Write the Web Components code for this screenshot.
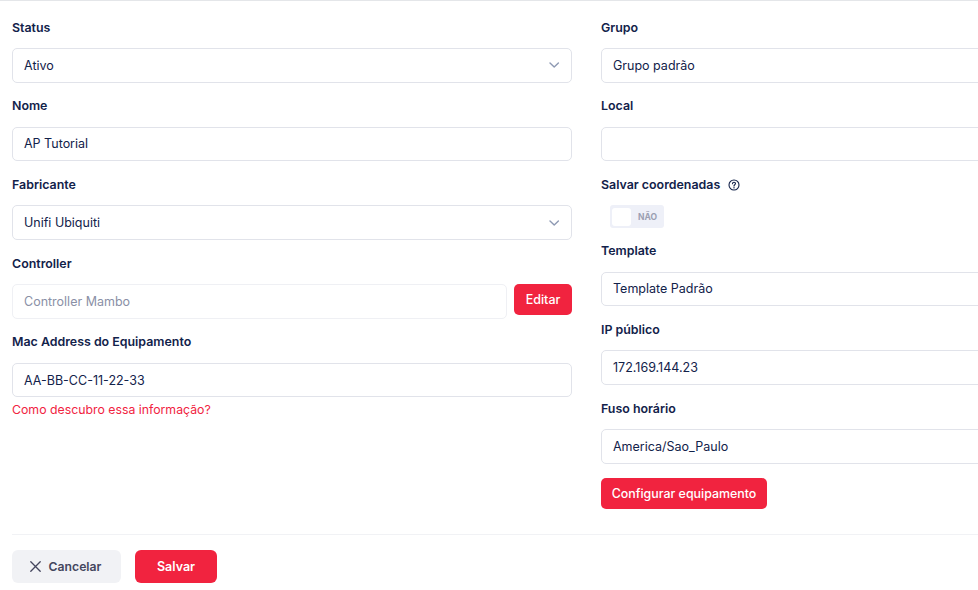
<!DOCTYPE html>
<html>

<head>
  <meta charset="UTF-8" />
  <title>Equipamento</title>
  <style>
    * {
      box-sizing: border-box;
    }

    html,
    body {
      margin: 0;
      height: 590px;
      overflow: hidden;
      background: #fff;
      font-family: Inter, "Noto Sans", sans-serif;
    }
  </style>
</head>

<body>
  <template id="form-field-template">
    <style>
      :host {
        display: block;
        box-sizing: border-box;
        height: 78.7px;
        padding-top: 17.2px;
      }

      label {
        display: flex;
        align-items: center;
        gap: 8px;
        height: 18px;
        margin-bottom: 11.7px;
        font-size: 12.4px;
        font-weight: 600;
        color: #12224a;
        white-space: nowrap;
      }
    </style>
    <label><span id="text"></span><slot name="hint"></slot></label>
    <slot></slot>
  </template>

  <template id="text-box-template">
    <style>
      :host {
        display: flex;
        box-sizing: border-box;
        align-items: center;
        height: 34.8px;
        padding: 0 11px;
        flex: 1;
        min-width: 0;
        font-size: 12.5px;
        color: #12224a;
        background: #fff;
        border: 1px solid #e1e3ea;
        border-radius: 5px;
      }

      :host([placeholder]) {
        color: #8a90a6;
        border-color: #eff0f4;
      }

      .value {
        flex: 1;
        white-space: nowrap;
      }

      svg {
        display: none;
      }

      :host([select]) svg {
        display: block;
      }
    </style>
    <span class="value"><slot></slot></span>
    <svg width="12" height="12" viewBox="0 0 12 12" fill="none" stroke="#8e99b3" stroke-width="1.4"
      stroke-linecap="round" stroke-linejoin="round">
      <path d="M2 4l4.200 4 4.200-4" />
    </svg>
  </template>

  <template id="action-button-template">
    <style>
      :host {
        display: inline-flex;
        box-sizing: border-box;
        align-items: center;
        justify-content: center;
        flex: none;
        gap: 8px;
        height: 31px;
        width: 58px;
        font-size: 12.5px;
        font-weight: 500;
        color: #fff;
        background: #f1233f;
        border-radius: 5px;
        white-space: nowrap;
      }

      :host([large]) {
        height: 33px;
        width: 82px;
        font-weight: 600;
        border-radius: 6px;
      }

      :host([wide]) {
        width: 166px;
        font-size: 12.4px;
      }

      :host([light]) {
        height: 33px;
        width: 109px;
        padding-right: 2px;
        font-size: 12.2px;
        font-weight: 600;
        color: #44465e;
        background: #f1f2f5;
        border-radius: 6px;
      }
    </style>
    <slot name="icon"></slot>
    <slot></slot>
  </template>

  <template id="yes-no-toggle-template">
    <style>
      :host {
        display: flex;
        box-sizing: border-box;
        align-items: center;
        width: 54px;
        height: 23px;
        margin-left: 9px;
        padding: 2px;
        background: #eef0f8;
        border-radius: 3px;
      }

      .knob {
        width: 19px;
        height: 18px;
        background: #fff;
        border-radius: 3px;
      }

      .text {
        margin-left: 7px;
        font-size: 8.5px;
        font-weight: 700;
        color: #9b9fb2;
      }
    </style>
    <span class="knob"></span>
    <span class="text"><slot></slot></span>
  </template>

  <script type="module">
    class TemplatedElement extends HTMLElement {
      constructor() {
        super()
        const template = document.getElementById(this.constructor.templateId)
        this.attachShadow({ mode: 'open' })
        this.shadowRoot.appendChild(template.content.cloneNode(true))
      }
    }

    class FormField extends TemplatedElement {
      static templateId = 'form-field-template'

      connectedCallback() {
        this.shadowRoot.getElementById('text').textContent = this.getAttribute('label')
      }
    }

    class TextBox extends TemplatedElement {
      static templateId = 'text-box-template'
    }

    class ActionButton extends TemplatedElement {
      static templateId = 'action-button-template'
    }

    class YesNoToggle extends TemplatedElement {
      static templateId = 'yes-no-toggle-template'
    }

    class EquipmentForm extends HTMLElement {
      constructor() {
        super()
        this.attachShadow({ mode: 'open' })
        this.shadowRoot.innerHTML = `
          <style>
            :host {
              display: block;
              box-sizing: border-box;
              width: 1190px;
              height: 590px;
              border-top: 1px solid #e4e6e9;
            }

            .columns {
              display: grid;
              grid-template-columns: 560px 560px;
              column-gap: 29px;
              padding-left: 12px;
              height: 533px;
            }

            .inline {
              display: flex;
              align-items: flex-start;
              gap: 7px;
            }

            .short {
              height: 66.3px;
            }

            .link {
              margin-top: 8px;
              font-size: 12.3px;
              color: #f1233f;
              white-space: nowrap;
            }

            .configure {
              margin-top: 17px;
            }

            .configure-row {
              display: flex;
            }

            .footer {
              display: flex;
              gap: 14px;
              margin-left: 12px;
              width: 966px;
              padding-top: 15px;
              border-top: 1px solid #f1f2f5;
            }

            svg {
              display: block;
            }
          </style>
          <div class="columns">
            <div>
              <form-field label="Status"><text-box select>Ativo</text-box></form-field>
              <form-field label="Nome"><text-box>AP Tutorial</text-box></form-field>
              <form-field label="Fabricante"><text-box select>Unifi Ubiquiti</text-box></form-field>
              <form-field label="Controller">
                <div class="inline">
                  <text-box placeholder>Controller Mambo</text-box>
                  <action-button>Editar</action-button>
                </div>
              </form-field>
              <form-field label="Mac Address do Equipamento"><text-box>AA-BB-CC-11-22-33</text-box></form-field>
              <div class="link">Como descubro essa informação?</div>
            </div>
            <div>
              <form-field label="Grupo"><text-box>Grupo padrão</text-box></form-field>
              <form-field label="Local"><text-box></text-box></form-field>
              <form-field class="short" label="Salvar coordenadas">
                <svg slot="hint" width="12" height="12" viewBox="0 0 12 12" fill="none" stroke="#12224a" stroke-width="1.1">
                  <circle cx="6" cy="6" r="5" />
                  <path d="M4.500 4.700c0-.9.7-1.400 1.500-1.400s1.500.5 1.500 1.300c0 1.100-1.500 1.200-1.500 2.300" stroke-linecap="round" />
                  <path d="M6 8.400v.6" stroke-linecap="round" />
                </svg>
                <yes-no-toggle>NÃO</yes-no-toggle>
              </form-field>
              <form-field label="Template"><text-box>Template Padrão</text-box></form-field>
              <form-field label="IP público"><text-box>172.169.144.23</text-box></form-field>
              <form-field label="Fuso horário"><text-box>America/Sao_Paulo</text-box></form-field>
              <div class="configure-row">
                <action-button class="configure" wide>Configurar equipamento</action-button>
              </div>
            </div>
          </div>
          <div class="footer">
            <action-button light>
              <svg slot="icon" width="11" height="11" viewBox="0 0 11 11" fill="none" stroke="#44465e" stroke-width="1.3" stroke-linecap="round">
                <path d="M.8.8l9.400 9.400M10.200.8L.8 10.200" />
              </svg>
              Cancelar
            </action-button>
            <action-button large>Salvar</action-button>
          </div>
        `
      }
    }

    customElements.define('form-field', FormField)
    customElements.define('text-box', TextBox)
    customElements.define('action-button', ActionButton)
    customElements.define('yes-no-toggle', YesNoToggle)
    customElements.define('equipment-form', EquipmentForm)
  </script>

  <equipment-form></equipment-form>
</body>

</html>
